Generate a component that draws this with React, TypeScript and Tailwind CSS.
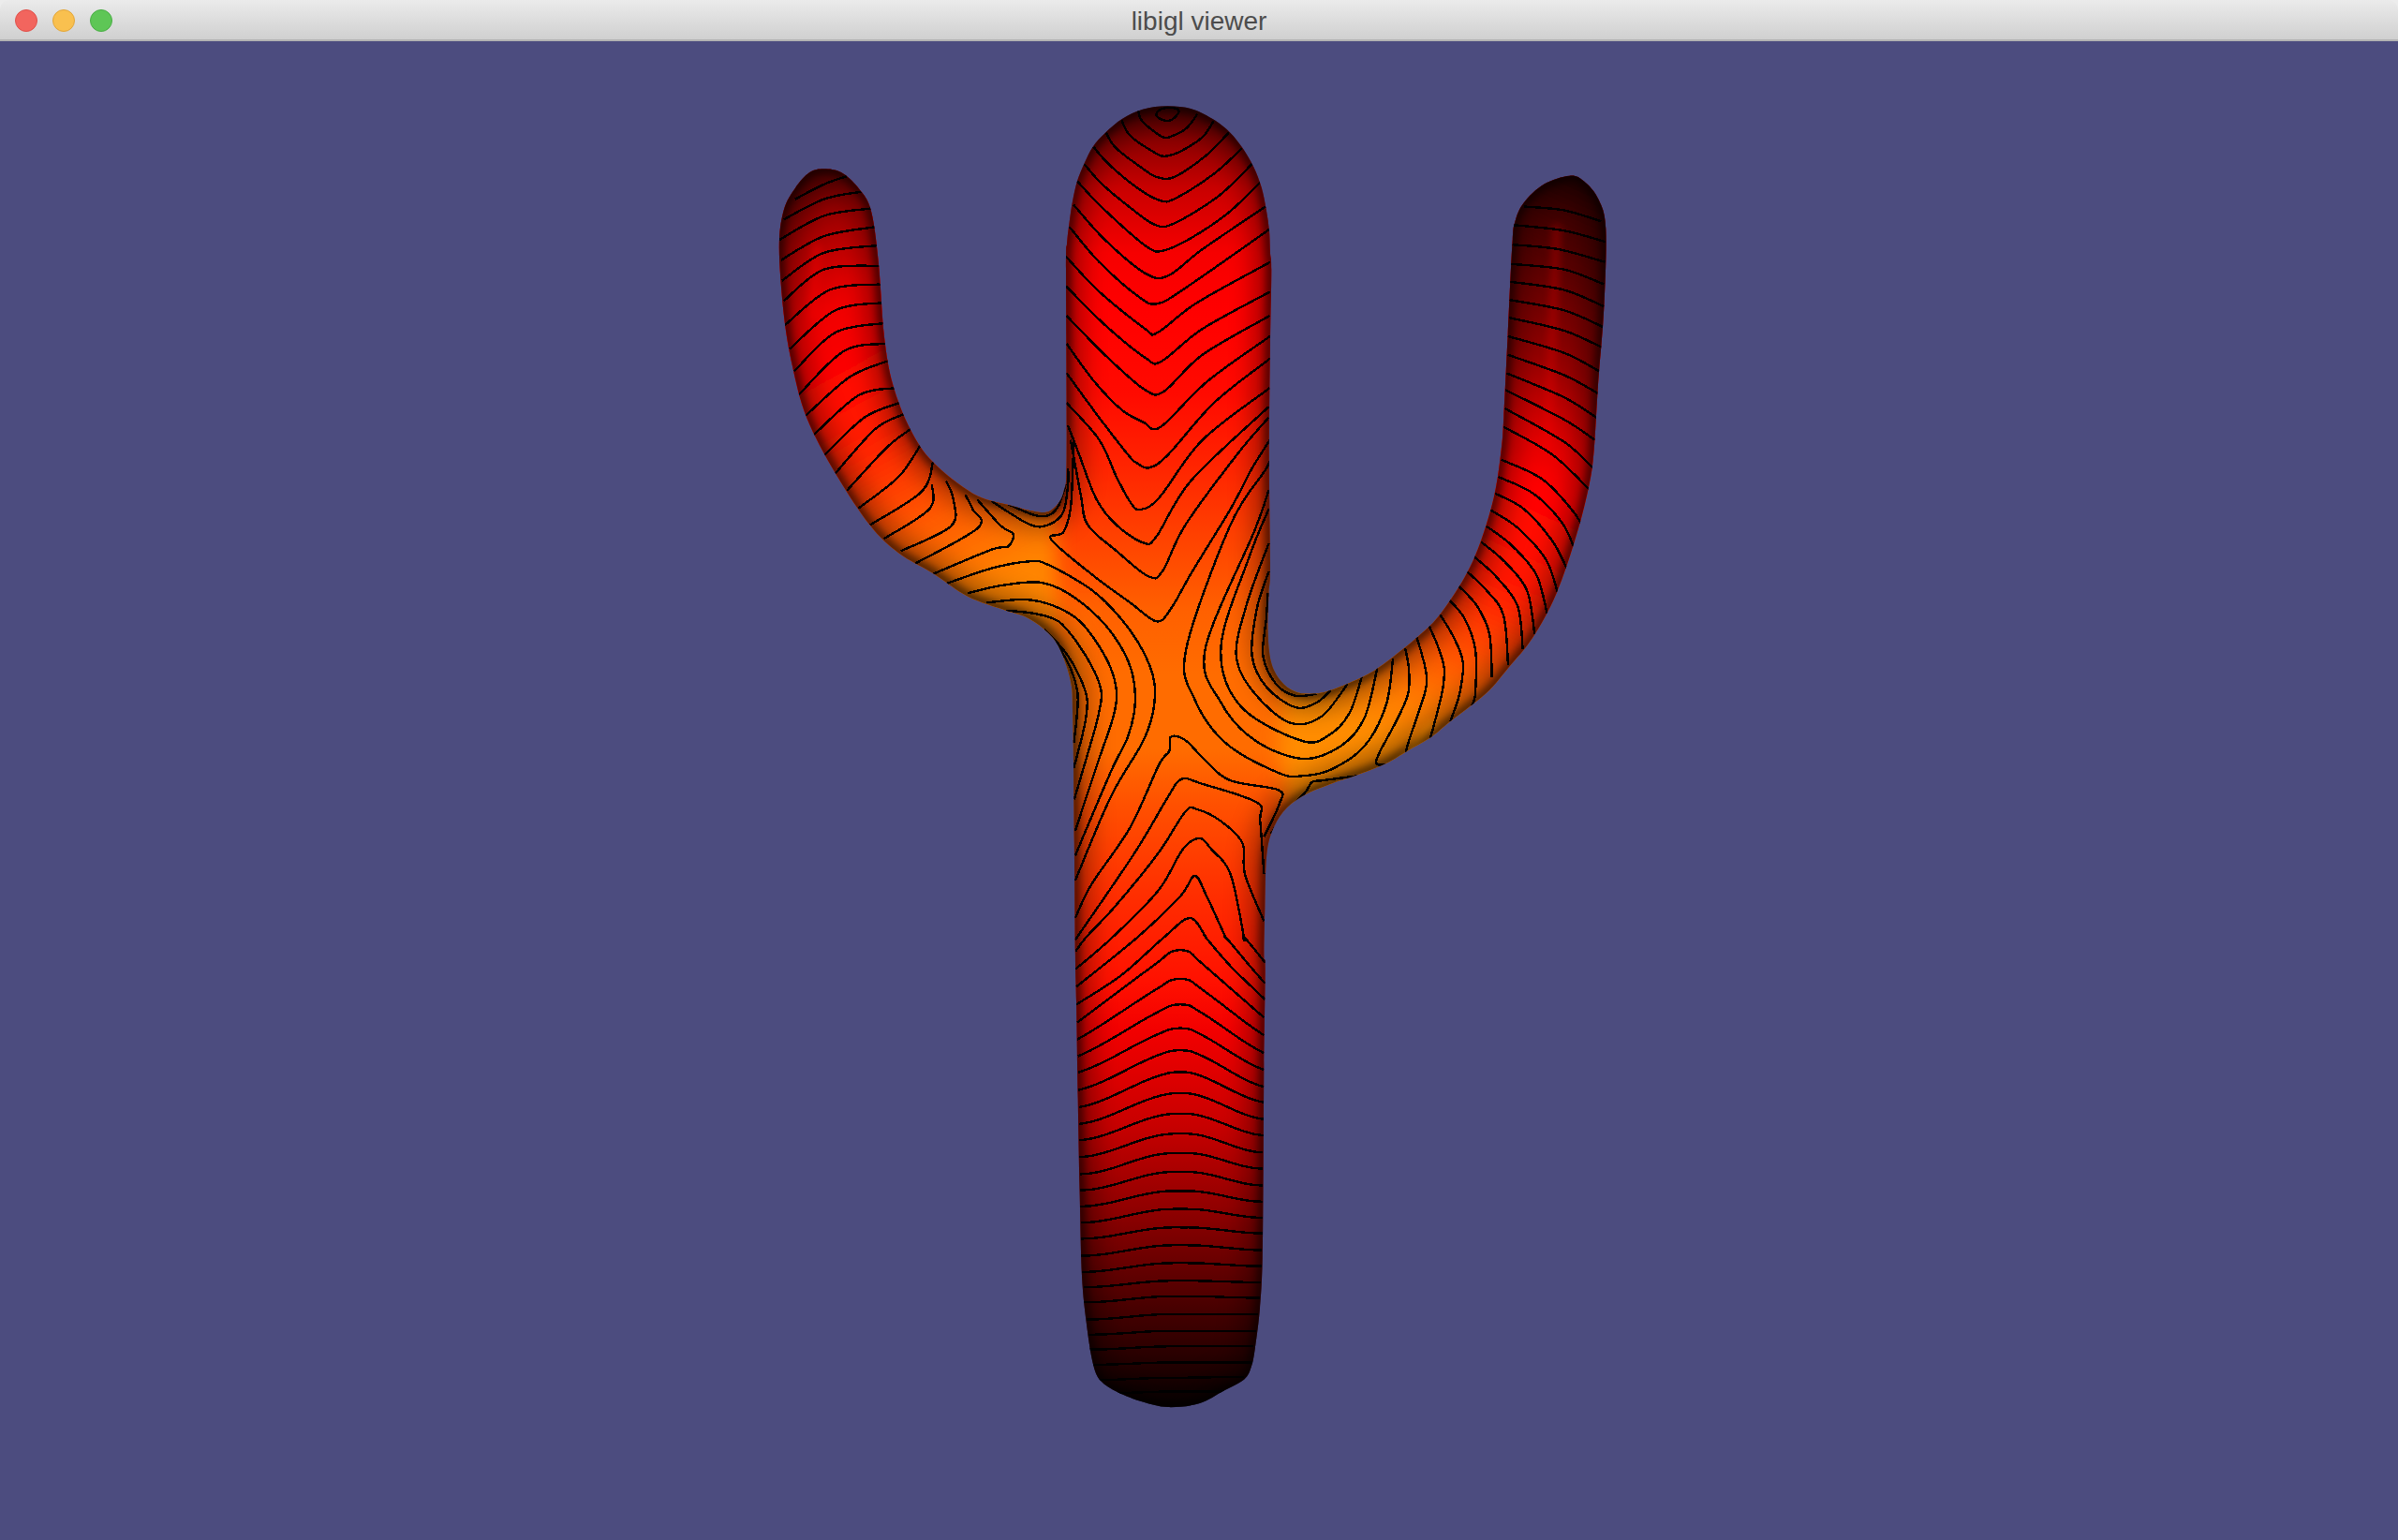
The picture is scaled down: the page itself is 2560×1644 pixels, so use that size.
import * as React from "react"

type Pt = [number, number]

// the shapes were traced on zoomed crops, each crop has its own scale
const z0 = (x: number, y: number): Pt => [1120 + x / 3, 100 + y / 3]
const zr = (x: number, y: number): Pt => [1480 + x / 3, 480 + y / 3]
const z3 = (x: number, y: number): Pt => [800 + x / 1.633, 90 + y / 2.529]
const z4 = (x: number, y: number): Pt => [880 + x / 1.96, 500 + y / 3]
const z5 = (x: number, y: number): Pt => [1080 + x / 3, 1000 + y / 2.9]

const pts = (map: (x: number, y: number) => Pt, flat: number[]) => {
  const out: Pt[] = []
  for (let i = 0; i < flat.length; i += 2) out.push(map(flat[i], flat[i + 1]))
  return out
}

const f = (n: number) => n.toFixed(1)

function smooth(p: Pt[], closed = false) {
  const at = (i: number) => (closed ? p[(i + p.length) % p.length] : p[Math.max(0, Math.min(p.length - 1, i))])
  let d = `M${f(p[0][0])} ${f(p[0][1])}`
  const n = closed ? p.length : p.length - 1
  for (let i = 0; i < n; i++) {
    const [a, b, c, e] = [at(i - 1), at(i), at(i + 1), at(i + 2)]
    d += `C${f(b[0] + (c[0] - a[0]) / 6)} ${f(b[1] + (c[1] - a[1]) / 6)} ${f(c[0] - (e[0] - b[0]) / 6)} ${f(c[1] - (e[1] - b[1]) / 6)} ${f(c[0])} ${f(c[1])}`
  }
  return closed ? d + "Z" : d
}

const outline = smooth(
  [
    ...pts(z0, [380, 40, 460, 50, 530, 85, 580, 125, 620, 175, 655, 235, 680, 300, 695, 370, 705, 440, 708, 510]),
    ...pts(z3, [910, 500, 908, 700, 906, 1000, 908, 1300]),
    ...pts(z4, [930, 400, 928, 520, 935, 620, 955, 680, 985, 715, 1020, 722, 1060, 710, 1130, 665]),
    ...pts(zr, [0, 680, 100, 600, 170, 530, 250, 410, 300, 300, 345, 150, 368, 0]),
    ...pts(z3, [1315, 900, 1322, 680, 1330, 430, 1335, 370, 1350, 320, 1385, 270, 1430, 247, 1455, 262, 1480, 310, 1493, 390, 1490, 600, 1480, 800]),
    ...pts(zr, [665, 0, 650, 110, 610, 270, 545, 460, 470, 600, 390, 700, 320, 780]),
    ...pts(z4, [1310, 810, 1270, 860, 1220, 905, 1175, 945, 1110, 985, 1060, 1010, 1000, 1050, 960, 1100, 935, 1170, 925, 1250, 922, 1400, 920, 1560]),
    ...pts(z5, [812, 100, 808, 400, 806, 700, 803, 1000, 795, 1150, 780, 1270, 768, 1330, 745, 1370, 680, 1405, 600, 1445, 500, 1456, 420, 1440, 340, 1410, 285, 1375, 260, 1320, 240, 1200, 225, 1050, 218, 800, 212, 500, 207, 200]),
    ...pts(z4, [525, 1560, 523, 1200, 520, 800, 515, 680, 490, 570, 460, 515, 420, 475, 380, 455, 300, 410]),
    ...pts(z3, [320, 1320, 260, 1265, 210, 1190, 150, 1050, 100, 900, 75, 760, 60, 620, 52, 440, 60, 340, 80, 280, 105, 238, 130, 228, 160, 238, 190, 280, 212, 340, 225, 480, 235, 680, 250, 810, 280, 930, 320, 1020, 390, 1105, 450, 1135, 505, 1155, 530, 1145, 548, 1100, 553, 1000, 552, 500]),
    ...pts(z0, [57, 480, 65, 410, 75, 345, 90, 280, 112, 225, 140, 170, 180, 125, 235, 80, 300, 50]),
  ],
  true,
)

const linesZ0 = [
  [285, 55, 300, 90, 360, 137, 390, 137, 440, 110, 475, 65],
  [232, 85, 260, 135, 340, 190, 372, 200, 420, 185, 490, 140, 527, 88],
  [182, 125, 215, 175, 300, 240, 345, 267, 400, 267, 500, 200, 575, 125],
  [142, 170, 190, 225, 280, 300, 355, 342, 405, 335, 530, 255, 617, 175],
  [112, 225, 170, 290, 260, 365, 335, 418, 395, 418, 540, 330, 650, 225],
  [90, 280, 150, 345, 240, 430, 320, 495, 365, 503, 450, 465, 570, 385, 675, 285],
]

const linesZ3 = [
  // middle finger chevrons
  [565, 325, 620, 420, 690, 510, 730, 517, 790, 445, 900, 330],
  [558, 385, 610, 480, 680, 575, 712, 592, 760, 550, 908, 390],
  [552, 465, 610, 560, 690, 660, 712, 670, 780, 590, 908, 480],
  [552, 545, 620, 650, 690, 738, 718, 748, 790, 660, 908, 560],
  [553, 625, 600, 700, 640, 760, 690, 825, 722, 830, 790, 730, 907, 625],
  [553, 700, 600, 800, 650, 880, 690, 915, 702, 930, 725, 915, 800, 800, 908, 680],
  [553, 780, 610, 900, 660, 1000, 675, 1022, 697, 1035, 730, 1000, 810, 860, 908, 740],
  [553, 860, 610, 960, 640, 1060, 665, 1130, 682, 1148, 715, 1115, 790, 960, 907, 820],
  [555, 920, 575, 1000, 605, 1120, 640, 1190, 687, 1238, 710, 1220, 770, 1070, 906, 870],
  [560, 960, 578, 1110, 590, 1190, 640, 1260, 695, 1328, 720, 1315, 760, 1190, 850, 1000, 905, 900],
  // right arm rings
  [1350, 330, 1420, 340, 1485, 370],
  [1333, 380, 1420, 395, 1492, 425],
  [1330, 433, 1410, 445, 1492, 480],
  [1328, 485, 1420, 500, 1490, 540],
  [1326, 533, 1420, 555, 1490, 600],
  [1325, 582, 1420, 610, 1488, 655],
  [1324, 630, 1420, 665, 1486, 710],
  [1322, 680, 1420, 725, 1482, 775],
  [1322, 730, 1420, 785, 1480, 835],
  [1320, 780, 1420, 845, 1477, 900],
  [1318, 825, 1420, 905, 1474, 960],
  [1317, 875, 1420, 965, 1470, 1035],
  [1315, 925, 1400, 1000, 1465, 1095],
  // left arm rings
  [80, 310, 130, 270, 170, 248],
  [60, 365, 130, 310, 195, 290],
  [52, 420, 130, 355, 212, 335],
  [55, 475, 130, 410, 220, 385],
  [57, 530, 130, 455, 225, 435],
  [60, 585, 130, 500, 228, 490],
  [62, 650, 140, 555, 228, 540],
  [70, 715, 150, 610, 232, 590],
  [78, 775, 150, 670, 235, 645],
  [85, 840, 165, 720, 240, 700],
  [98, 895, 175, 790, 245, 745],
  [110, 950, 190, 840, 255, 820],
  [125, 1010, 200, 900, 262, 860],
  [150, 1050, 220, 930, 270, 890],
  [170, 1097, 240, 980, 282, 930],
  [190, 1145, 260, 1060, 298, 975],
  [210, 1190, 300, 1100, 320, 1020],
]

const linesZr = [
  [368, 32, 500, 95, 600, 200, 640, 270],
  [358, 87, 470, 140, 560, 230, 600, 310],
  [348, 140, 440, 190, 530, 290, 578, 380],
  [333, 193, 420, 250, 510, 350, 548, 455],
  [320, 245, 400, 305, 480, 400, 515, 525],
  [303, 295, 380, 360, 450, 450, 475, 590],
  [280, 342, 350, 405, 420, 500, 437, 640],
  [258, 390, 320, 450, 375, 530, 390, 690],
  [232, 437, 290, 500, 330, 590, 338, 730],
]

const linesZ4 = [
  // left arm into the junction
  [125, 225, 220, 130, 225, 50],
  [160, 265, 265, 185, 270, 100, 255, 40],
  [190, 305, 322, 190, 310, 130, 295, 85],
  [225, 340, 350, 260, 385, 250, 395, 210, 370, 185, 320, 100],
  [350, 105, 430, 180, 470, 180, 500, 140, 510, 50, 510, 0],
  [385, 115, 440, 150, 470, 150, 490, 120, 505, 50],
  // lines running from the left arm down the trunk
  [250, 372, 350, 320, 430, 298, 470, 310, 560, 390, 620, 480, 665, 580, 690, 680, 688, 780, 665, 880, 600, 1050, 525, 1320],
  [300, 400, 370, 375, 450, 365, 510, 400, 575, 480, 620, 570, 645, 660, 650, 760, 635, 860, 600, 970, 525, 1240],
  [340, 430, 420, 420, 480, 440, 535, 490, 575, 570, 602, 650, 612, 730, 602, 810, 575, 930, 525, 1160],
  [380, 455, 440, 465, 490, 490, 530, 560, 565, 650, 580, 720, 572, 800, 550, 920, 523, 1060],
  [460, 515, 505, 590, 535, 670, 550, 740, 545, 820, 522, 960],
  [485, 555, 515, 640, 530, 720, 528, 800, 522, 880],
  // the long chevron that ends at the centre, both legs run on to the trunk edge
  [522, -100, 520, 0, 515, 130, 500, 205, 475, 228, 560, 340, 640, 430, 695, 490, 725, 450, 770, 330, 850, 130, 895, 0, 932, -90],
  // U shapes round the right crotch
  [928, 400, 925, 480, 918, 600, 945, 690, 985, 728, 1030, 722],
  [930, 330, 905, 450, 895, 600, 925, 700, 985, 765, 1030, 750, 1060, 710],
  [930, 240, 885, 430, 862, 600, 900, 720, 975, 815, 1040, 795, 1095, 690],
  [930, 130, 890, 280, 830, 570, 870, 760, 1000, 873, 1060, 850, 1100, 780, 1125, 665],
  [930, 70, 900, 200, 797, 580, 830, 750, 900, 870, 1000, 930, 1080, 890, 1130, 800, 1157, 640],
  [934, -40, 925, 0, 850, 180, 757, 580, 775, 740, 840, 880, 950, 975, 1000, 985, 1060, 965, 1130, 890, 1175, 760, 1190, 610],
  [1115, 985, 1040, 1000, 1020, 1005, 1005, 1040, 960, 1110, 935, 1170],
  // lower trunk chevrons
  [525, 1440, 560, 1330, 640, 1150, 700, 950, 722, 905, 725, 860, 755, 870, 800, 940, 850, 1000, 950, 1030, 952, 1075, 920, 1180],
  [525, 1510, 650, 1230, 720, 1050, 748, 995, 790, 1010, 905, 1070, 912, 1130, 920, 1300],
]

// left x, left y, apex y, right x, right y of the bands at the foot of the trunk
const footBands = [
  [210, 265, 45, 808, 250],
  [210, 318, 133, 808, 305],
  [212, 370, 212, 808, 360],
  [213, 420, 285, 808, 412],
  [213, 475, 353, 808, 465],
  [215, 528, 420, 808, 513],
  [215, 580, 485, 808, 565],
  [217, 630, 548, 808, 615],
  [217, 682, 610, 805, 668],
  [218, 735, 670, 805, 718],
  [219, 785, 728, 805, 770],
  [220, 835, 787, 805, 820],
  [222, 885, 843, 805, 870],
  [222, 935, 900, 803, 918],
  [222, 988, 955, 802, 970],
  [225, 1038, 1010, 800, 1020],
  [230, 1085, 1065, 798, 1070],
  [232, 1132, 1113, 795, 1118],
  [240, 1185, 1168, 790, 1168],
  [245, 1232, 1220, 782, 1220],
  [250, 1278, 1268, 775, 1268],
  [262, 1325, 1318, 770, 1318],
  [280, 1372, 1365, 745, 1362],
  [340, 1412, 1408, 680, 1408],
]

function footBand([lx, ly, ay, rx, ry]: number[], i: number) {
  const w = Math.min(1, i / 9)
  const apex = 540
  const ease = (t: number) => (1 - w) * t + w * (3 * t * t - 2 * t * t * t)
  const out: Pt[] = []
  for (let k = 0; k <= 8; k++) {
    const x = lx + ((apex - 25 - lx) * k) / 8
    out.push(z5(x, ay + (ly - ay) * ease(1 - k / 8)))
  }
  for (let k = 0; k <= 8; k++) {
    const x = apex + 25 + ((rx - apex - 25) * k) / 8
    out.push(z5(x, ay + (ry - ay) * ease(k / 8)))
  }
  return out
}

// lines that run across two crops
const joined: Pt[][] = [
  [...pts(zr, [203, 483, 250, 540, 285, 640, 285, 780]), ...pts(z4, [1355, 760])],
  [...pts(zr, [172, 528, 215, 600, 245, 680, 235, 780]), ...pts(z4, [1310, 810])],
  [...pts(zr, [137, 565, 165, 630, 185, 700, 178, 780]), ...pts(z4, [1268, 865])],
  [...pts(zr, [97, 600, 115, 660, 128, 720, 123, 780]), ...pts(z4, [1218, 900, 1228, 908])],
  [...pts(zr, [60, 635, 72, 700, 70, 780]), ...pts(z4, [1200, 800, 1155, 935, 1178, 948])],
  [...pts(z5, [205, 45, 240, 0]), ...pts(z4, [610, 1400, 700, 1230, 755, 1100, 780, 1092, 830, 1130, 875, 1200, 880, 1300, 920, 1450])],
  [...pts(z5, [205, 100, 325, 0]), ...pts(z4, [700, 1350, 750, 1220, 785, 1185, 810, 1220, 850, 1300, 878, 1500]), ...pts(z5, [745, 0, 812, 80])],
  [...pts(z5, [207, 155, 405, 0]), ...pts(z4, [745, 1370, 775, 1305, 800, 1370, 839, 1500]), ...pts(z5, [685, 0, 745, 70, 812, 145])],
  [...pts(z5, [207, 210, 350, 120, 490, 0]), ...pts(z4, [765, 1440, 798, 1500]), ...pts(z5, [620, 0, 700, 90, 812, 195])],
]

const contours = [
  smooth(pts(z0, [343, 65, 358, 82, 390, 85, 415, 60, 405, 47, 365, 47]), true),
  ...linesZ0.map((l) => smooth(pts(z0, l))),
  ...linesZ3.map((l) => smooth(pts(z3, l))),
  ...linesZr.map((l) => smooth(pts(zr, l))),
  ...linesZ4.map((l) => smooth(pts(z4, l))),
  ...footBands.map((b, i) => smooth(footBand(b, i))),
  ...joined.map((p) => smooth(p)),
]

const trunkStops: [number, string][] = [
  [114, "#4a0000"], [150, "#8c0000"], [200, "#c80000"], [270, "#f60000"], [330, "#ff0000"], [420, "#ff0a00"],
  [500, "#ff2500"], [570, "#ff4000"], [650, "#ff6000"], [720, "#ff6c00"], [800, "#ff6c00"], [860, "#ff5000"],
  [950, "#ff3000"], [1050, "#ff1000"], [1100, "#f20000"], [1200, "#c80000"], [1300, "#8a0000"], [1400, "#450000"],
  [1480, "#150000"], [1500, "#0a0000"],
]

function Cactus() {
  return (
    <svg viewBox="0 44 2560 1600" className="block h-[1600px] w-[2560px]">
      <defs>
        <clipPath id="body">
          <path d={outline} />
        </clipPath>
        <linearGradient id="trunk" gradientUnits="userSpaceOnUse" x1="0" y1="114" x2="0" y2="1500">
          {trunkStops.map(([y, c]) => (
            <stop key={y} offset={(y - 114) / 1386} stopColor={c} />
          ))}
        </linearGradient>
        <linearGradient id="leftArm" gradientUnits="userSpaceOnUse" x1="880" y1="180" x2="1110" y2="600">
          <stop offset="0" stopColor="#5a0000" />
          <stop offset="0.12" stopColor="#a80000" />
          <stop offset="0.28" stopColor="#f00000" />
          <stop offset="0.45" stopColor="#ff0800" />
          <stop offset="0.62" stopColor="#ff2a00" />
          <stop offset="0.8" stopColor="#ff5a00" />
          <stop offset="1" stopColor="#ff8500" />
        </linearGradient>
        <linearGradient id="rightArm" gradientUnits="userSpaceOnUse" x1="1680" y1="190" x2="1420" y2="760">
          <stop offset="0" stopColor="#2a0000" />
          <stop offset="0.15" stopColor="#5a0000" />
          <stop offset="0.3" stopColor="#950000" />
          <stop offset="0.42" stopColor="#e00000" />
          <stop offset="0.5" stopColor="#ff0000" />
          <stop offset="0.68" stopColor="#ff1a00" />
          <stop offset="0.8" stopColor="#ff4a00" />
          <stop offset="0.92" stopColor="#ff7a00" />
          <stop offset="1" stopColor="#ff8c00" />
        </linearGradient>
        <filter id="soft" filterUnits="userSpaceOnUse" x="0" y="0" width="2560" height="1644">
          <feGaussianBlur stdDeviation="10" />
        </filter>
        <filter id="wide" filterUnits="userSpaceOnUse" x="0" y="0" width="2560" height="1644">
          <feGaussianBlur stdDeviation="13" />
        </filter>
        <filter id="tight" filterUnits="userSpaceOnUse" x="0" y="0" width="2560" height="1644">
          <feGaussianBlur stdDeviation="4" />
        </filter>
      </defs>
      <g clipPath="url(#body)">
        <rect x="780" y="90" width="1000" height="1430" fill="url(#trunk)" />
        <path d="M780 90H1128V1000H1100L1160 640L1040 1000H780Z" fill="url(#leftArm)" filter="url(#soft)" />
        <path d="M1780 90H1385V640L1365 800L1400 1000H1780Z" fill="url(#rightArm)" filter="url(#soft)" />
        {/* edge falloff */}
        <path d={outline} fill="none" stroke="#000" strokeWidth="36" opacity="0.34" filter="url(#wide)" />
        <path d={outline} fill="none" stroke="#000" strokeWidth="10" opacity="0.6" filter="url(#tight)" />
        {/* soft specular streaks on the arms */}
        <path d="M1662 240L1652 480" fill="none" stroke="#ff0000" strokeWidth="8" opacity="0.3" filter="url(#tight)" />
        <path d="M872 260L868 340" fill="none" stroke="#ff0000" strokeWidth="8" opacity="0.4" filter="url(#tight)" />
        <path d="M1530 770L1470 850" fill="none" stroke="#ffa000" strokeWidth="6" opacity="0.35" filter="url(#tight)" />
        {contours.map((d, i) => (
          <path key={i} d={d} fill="none" stroke="#000" strokeWidth="2.4" strokeLinejoin="round" shapeRendering="crispEdges" />
        ))}
      </g>
    </svg>
  )
}

export default function App() {
  return (
    <div className="h-[1644px] w-[2560px] overflow-hidden bg-[#ececec] font-['Liberation_Sans',Arial,sans-serif]">
      <div className="relative flex h-[44px] items-center justify-center rounded-t-[10px] border-b-2 border-[#b3b3b3] bg-gradient-to-b from-[#ebebeb] to-[#d0d0d0] pt-[3px]">
        <div className="absolute left-[16px] top-[10px] flex gap-[16px]">
          <span className="h-[24px] w-[24px] rounded-full border border-[#e0504a] bg-[#f2655e]" />
          <span className="h-[24px] w-[24px] rounded-full border border-[#e2a63a] bg-[#f9c04f]" />
          <span className="h-[24px] w-[24px] rounded-full border border-[#4aae46] bg-[#5ec656]" />
        </div>
        <span className="text-[28px] leading-none text-[#4c4c4c]">libigl viewer</span>
      </div>
      <div className="bg-[#4c4c7f]">
        <Cactus />
      </div>
    </div>
  )
}
